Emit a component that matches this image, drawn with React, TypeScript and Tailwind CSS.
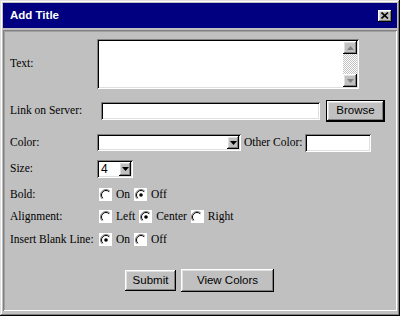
import React from "react";

const serif = { fontFamily: '"Liberation Serif", "Times New Roman", serif' };
const sans = { fontFamily: '"Liberation Sans", Arial, sans-serif' };

function Radio({ checked }: { checked?: boolean }) {
  return (
    <span className="inline-flex w-[13px] h-[13px] bg-white items-center justify-center shrink-0">
      <svg width="12" height="12" viewBox="0 0 12 12">
        <path d="M2.1 9.9 A5.5 5.5 0 0 1 9.9 2.1" fill="none" stroke="#808080" strokeWidth="1" />
        <path d="M2.8 9.2 A4.5 4.5 0 0 1 9.2 2.8" fill="none" stroke="#000" strokeWidth="1" />
        {checked && <circle cx="6" cy="6" r="1.8" fill="#000" />}
      </svg>
    </span>
  );
}

function Label({ children }: { children: React.ReactNode }) {
  return (
    <div className="w-[87px] shrink-0 text-[11.5px] text-black leading-none" style={serif}>
      {children}
    </div>
  );
}

const sunken =
  "bg-white shadow-[inset_1px_1px_0_#808080,inset_-1px_-1px_0_#fff,inset_2px_2px_0_#000,inset_-2px_-2px_0_#dfdfdf]";
const raised =
  "bg-[#c0c0c0] shadow-[inset_-1px_-1px_0_#000,inset_1px_1px_0_#fff,inset_-2px_-2px_0_#808080,inset_2px_2px_0_#dfdfdf]";

function DownArrowBtn({ w, h, color = "#000" }: { w: number; h: number; color?: string }) {
  return (
    <div className={`${raised} flex items-center justify-center shrink-0`} style={{ width: w, height: h }}>
      <svg width="7" height="4" viewBox="0 0 7 4">
        <path d="M0 0 H7 L3.5 4 Z" fill={color} />
      </svg>
    </div>
  );
}

function RadioGroup({ items }: { items: { label: string; checked?: boolean }[] }) {
  return (
    <div className="flex items-center ml-[2px]">
      {items.map((it, i) => (
        <div key={i} className="flex items-center mr-[4px]">
          <Radio checked={it.checked} />
          <span className="ml-[4px] text-[11.5px] leading-none" style={serif}>
            {it.label}
          </span>
        </div>
      ))}
    </div>
  );
}

export default function App() {
  return (
    <div className="w-[400px] h-[316px] bg-[#c0c0c0] p-[3px] flex flex-col shadow-[inset_-1px_-1px_0_#000,inset_1px_1px_0_#dfdfdf,inset_-2px_-2px_0_#808080,inset_2px_2px_0_#fff]">
      {/* Title bar */}
      <div className="h-[25px] bg-[#000080] flex items-center justify-between pl-[7px] pr-[5px] shrink-0">
        <span className="text-white font-bold text-[11.5px] leading-none" style={sans}>
          Add Title
        </span>
        <div className={`${raised} w-[14px] h-[12px] flex items-center justify-center`}>
          <svg width="8" height="7" viewBox="0 0 8 7">
            <path d="M0.5 0.5 L7 6.5 M7 0.5 L0.5 6.5" stroke="#000" strokeWidth="1.6" />
          </svg>
        </div>
      </div>

      {/* Panel */}
      <div className="mt-[2px] h-[281px] shrink-0 pl-[7px] pt-[9px] shadow-[inset_1px_1px_0_#808080,inset_-1px_-1px_0_#fff,inset_2px_2px_0_#a0a0a0]">
        {/* Text */}
        <div className="flex items-center h-[50px]">
          <Label>Text:</Label>
          <div className={`${sunken} w-[262px] h-[50px] flex justify-end p-[2px]`}>
            <div className="w-[14px] h-full flex flex-col">
              <div className={`${raised} h-[13px] flex items-center justify-center`}>
                <svg width="7" height="4" viewBox="0 0 7 4">
                  <path d="M0 4 H7 L3.5 0 Z" fill="#808080" />
                </svg>
              </div>
              <div className="flex-1 bg-[repeating-conic-gradient(#c0c0c0_0_25%,#ffffff_0_50%)] bg-[length:2px_2px]" />
              <div className={`${raised} h-[13px] flex items-center justify-center`}>
                <svg width="7" height="4" viewBox="0 0 7 4">
                  <path d="M0 0 H7 L3.5 4 Z" fill="#808080" />
                </svg>
              </div>
            </div>
          </div>
        </div>

        {/* Link on Server */}
        <div className="flex items-center h-[22px] mt-[11px]">
          <Label>Link on Server:</Label>
          <div className={`${sunken} w-[219px] h-[18px] ml-[4px]`} />
          <div className="ml-[6px] w-[59px] h-[22px] border border-black">
            <div className={`${raised} w-full h-full flex items-center justify-center text-[11.5px] leading-none`} style={sans}>
              Browse
            </div>
          </div>
        </div>

        {/* Color */}
        <div className="flex items-center h-[19px] mt-[11px]">
          <Label>Color:</Label>
          <div className={`${sunken} w-[144px] h-[17px] flex justify-end items-center pr-[2px]`}>
            <DownArrowBtn w={12} h={13} />
          </div>
          <span className="ml-[3px] text-[11.5px] leading-none" style={serif}>
            Other Color:
          </span>
          <div className={`${sunken} w-[66px] h-[18px] ml-[3px]`} />
        </div>

        {/* Size */}
        <div className="flex items-center h-[18px] mt-[8px]">
          <Label>Size:</Label>
          <div className={`${sunken} w-[36px] h-[18px] flex items-center justify-between pl-[4px] pr-[2px]`}>
            <span className="text-[12px] leading-none" style={sans}>
              4
            </span>
            <DownArrowBtn w={12} h={14} />
          </div>
        </div>

        {/* Bold */}
        <div className="flex items-center h-[13px] mt-[10px]">
          <Label>Bold:</Label>
          <RadioGroup items={[{ label: "On" }, { label: "Off", checked: true }]} />
        </div>

        {/* Alignment */}
        <div className="flex items-center h-[13px] mt-[9px]">
          <Label>Alignment:</Label>
          <RadioGroup
            items={[{ label: "Left" }, { label: "Center", checked: true }, { label: "Right" }]}
          />
        </div>

        {/* Insert Blank Line */}
        <div className="flex items-center h-[13px] mt-[10px]">
          <Label>Insert Blank Line:</Label>
          <RadioGroup items={[{ label: "On", checked: true }, { label: "Off" }]} />
        </div>

        {/* Buttons */}
        <div className="flex items-center h-[23px] mt-[23px] pl-[115px] gap-[5px]">
          <div className={`${raised} w-[51px] h-[21px] flex items-center justify-center text-[11.5px] leading-none`} style={sans}>
            Submit
          </div>
          <div className={`${raised} w-[93px] h-[23px] flex items-center justify-center text-[11.5px] leading-none`} style={sans}>
            View Colors
          </div>
        </div>
      </div>
    </div>
  );
}
